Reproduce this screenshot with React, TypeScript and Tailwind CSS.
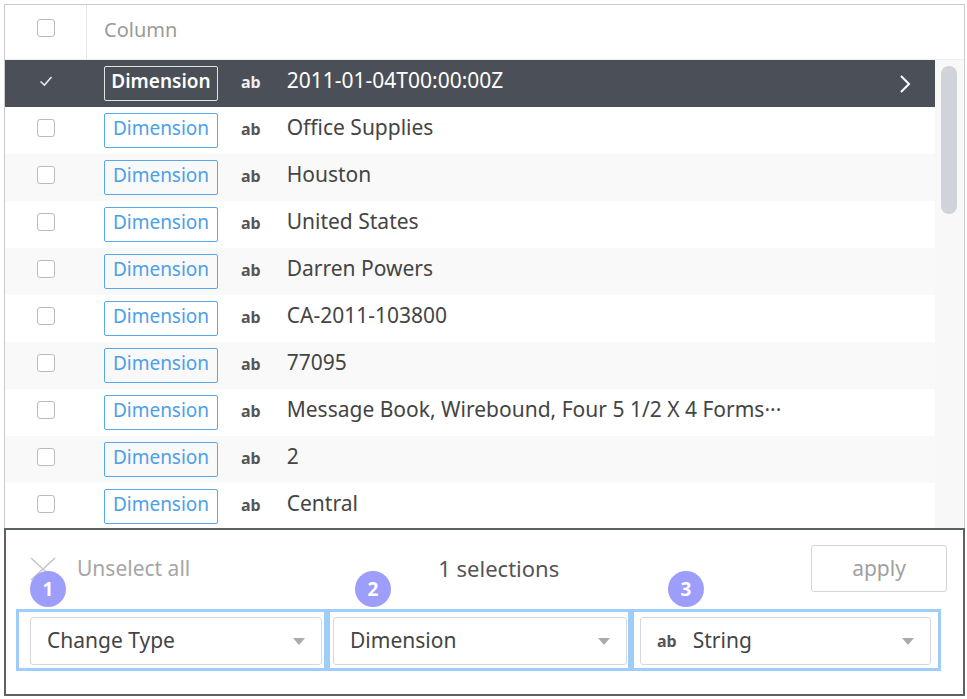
import React from "react";

const rows = [
	"2011-01-04T00:00:00Z",
	"Office Supplies",
	"Houston",
	"United States",
	"Darren Powers",
	"CA-2011-103800",
	"77095",
	"Message Book, Wirebound, Four 5 1/2 X 4 Forms···",
	"2",
	"Central",
];

function Caret() {
	return (
		<svg width="12" height="7" viewBox="0 0 12 7">
			<path d="M0 0 L12 0 L6 7 Z" fill="#a9abb2" />
		</svg>
	);
}

function Badge({ n, left }: { n: number; left: string }) {
	return (
		<div className={`absolute -top-[41px] ${left} flex h-[36px] w-[36px] items-center justify-center rounded-full bg-[#9d9dfb] text-[19px] font-bold text-white`}>
			{n}
		</div>
	);
}

function Select({ label, ab }: { label: string; ab?: boolean }) {
	return (
		<div className="flex h-[48px] flex-1 items-center rounded-[3px] border border-[#d6d7dc] bg-white pl-[16px] pr-[16px]">
			{ab && <span className="mr-[16px] text-[16px] font-bold text-[#555]">ab</span>}
			<span className="flex-1 text-[21px] text-[#444]">{label}</span>
			<Caret />
		</div>
	);
}

export default function App() {
	return (
		<div className="h-[699px] w-[967px] bg-white pl-[4px] pt-[4px]" style={{ fontFamily: '"Noto Sans", sans-serif' }}>
			<div className="flex w-[961px] flex-col">
				{/* table */}
				<div className="h-[524px] overflow-hidden border-l border-r border-t border-[#c9cbd0]">
					<div className="flex h-[55px] border-b border-[#eeeff1]">
						<div className="flex w-[82px] items-center justify-center border-r border-[#e6e7ea] pb-[8px]">
							<div className="h-[18px] w-[18px] rounded-[3px] border border-[#b9bbc0]" />
						</div>
						<div className="flex items-center pb-[5px] pl-[17px] text-[20px] text-[#9a9a9a]">Column</div>
					</div>
					<div className="flex h-[468px]">
						<div className="w-[930px]">
							{rows.map((r, i) => {
								const sel = i === 0;
								return (
									<div
										key={i}
										className={`flex h-[47px] items-center ${sel ? "bg-[#4b4f57]" : i % 2 === 0 ? "bg-[#f9f9f9]" : "bg-white"}`}
									>
										<div className="mb-[6px] flex w-[82px] justify-center">
											{sel ? (
												<svg width="14" height="12" viewBox="0 0 14 12">
													<path d="M1.5 6.5 L5.5 10 L12.5 2" fill="none" stroke="#e8e8e8" strokeWidth="1.6" />
												</svg>
											) : (
												<div className="h-[18px] w-[18px] rounded-[3px] border border-[#b9bbc0] bg-white" />
											)}
										</div>
										<div
											className={`ml-[17px] flex h-[35px] w-[114px] items-center justify-center rounded-[2px] border-[1.5px] pb-[4px] text-[19px] ${
												sel ? "border-[#e4e4e4] font-semibold text-white" : "border-[#58a8ec] text-[#4ba0e8]"
											}`}
										>
											Dimension
										</div>
										<span className={`mb-[4px] ml-[23px] text-[16px] font-bold ${sel ? "text-[#f0f0f0]" : "text-[#555]"}`}>ab</span>
										<span className={`mb-[6px] ml-[26px] flex-1 text-[21px] ${sel ? "text-white" : "text-[#444]"}`}>{r}</span>
										{sel && (
											<svg className="mr-[24px]" width="12" height="20" viewBox="0 0 12 20">
												<path d="M2 2 L10 10 L2 18" fill="none" stroke="#fff" strokeWidth="2" />
											</svg>
										)}
									</div>
								);
							})}
						</div>
						<div className="flex-1 bg-[#f8f8f9] pl-[6px] pr-[6px] pt-[6px]">
							<div className="h-[148px] w-[16px] rounded-full bg-[#d1d3da]" />
						</div>
					</div>
				</div>
				{/* bottom panel */}
				<div className="h-[168px] border-2 border-[#5d6168] bg-white">
					<div className="mt-[15px] flex h-[47px] items-center pr-[16px]">
						<svg className="ml-[24px]" width="26" height="24" viewBox="0 0 26 24">
							<path d="M1 1 L25 23 M25 1 L1 23" stroke="#c4c5c9" strokeWidth="1.5" />
						</svg>
						<span className="ml-[21px] text-[21px] text-[#a6a6a6]">Unselect all</span>
						<span className="ml-[248px] text-[22px] text-[#555]">1 selections</span>
						<div className="ml-auto flex h-[47px] w-[136px] items-center justify-center rounded-[3px] border border-[#d3d4d8] text-[21px] text-[#a0a0a0]">
							apply
						</div>
					</div>
					<div className="ml-[10px] mt-[17px] flex">
						<div className="relative flex h-[62px] w-[311px] items-start border-[3px] border-[#9fcdfa] pl-[11px] pr-[2px] pt-[5px]">
							<Badge n={1} left="left-[11px]" />
							<Select label="Change Type" />
						</div>
						<div className="relative flex h-[62px] w-[304px] items-start border-[3px] border-[#9fcdfa] pl-[3px] pr-[1px] pt-[5px]">
							<Badge n={2} left="left-[25px]" />
							<Select label="Dimension" />
						</div>
						<div className="relative flex h-[62px] w-[310px] items-start border-[3px] border-[#9fcdfa] pl-[6px] pr-[7px] pt-[5px]">
							<Badge n={3} left="left-[34px]" />
							<Select label="String" ab />
						</div>
					</div>
				</div>
			</div>
		</div>
	);
}
